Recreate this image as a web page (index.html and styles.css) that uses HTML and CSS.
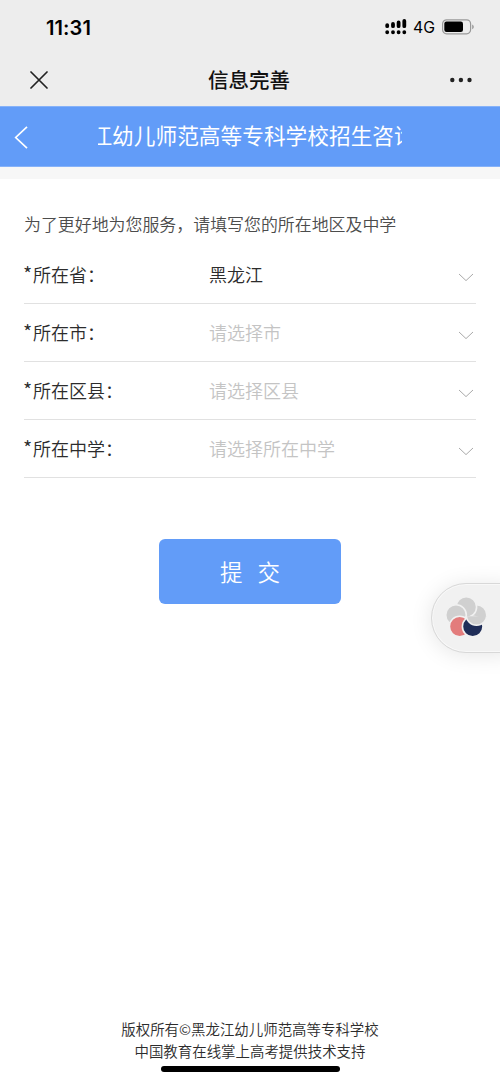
FILE: index.html
```html
<!DOCTYPE html>
<html lang="zh-CN">
<head>
<meta charset="utf-8">
<title>信息完善</title>
<link rel="stylesheet" href="styles.css">
</head>
<body>
<div class="screen">
  <header class="top">
    <div class="status">
      <span class="time">11:31</span>
      <div class="indicators">
        <svg class="signal" width="22" height="16" viewBox="0 0 22 16"><path d="M2.2 6.2V7.2M8 5V7.2M13.6 3.4V7.2M19.3 2V7.2M2.2 13.1V13.3M8 13.1V13.3M13.6 13.1V13.3M19.3 13.1V13.3" stroke="#000" stroke-width="3.8" stroke-linecap="round" fill="none"/></svg>
        <span class="network">4G</span>
        <svg class="battery" width="32" height="16" viewBox="0 0 32 16"><rect x=".6" y=".8" width="28" height="14" rx="4" fill="none" stroke="#999" stroke-width="1.2"/><rect x="2.3" y="2.5" width="18.7" height="10.4" rx="2.2"/><path d="M30.2 5.4C32.3 6.2 32.3 9.4 30.2 10.2Z" fill="#999"/></svg>
      </div>
    </div>
    <div class="nav">
      <svg width="18" height="18" viewBox="0 0 18 18"><path d="M1 1L17 17M17 1L1 17" stroke="#222" stroke-width="1.7" stroke-linecap="round"/></svg>
      <h1 class="nav-title">信息完善</h1>
      <svg width="22" height="6" viewBox="0 0 22 6" fill="#222"><circle cx="2.3" cy="3" r="2.2"/><circle cx="10.9" cy="3" r="2.2"/><circle cx="19.5" cy="3" r="2.2"/></svg>
    </div>
  </header>
  <div class="banner">
    <svg class="back" width="14" height="24" viewBox="0 0 14 24"><path d="M13 1.8L1.7 12.5L13 23.2" fill="none" stroke="#fff" stroke-width="1.7"/></svg>
    <div class="marquee"><span class="marquee-text">黑龙江幼儿师范高等专科学校招生咨询</span></div>
  </div>
  <div class="divider"></div>
  <main class="form">
    <p class="hint">为了更好地为您服务，请填写您的所在地区及中学</p>
    <div class="row"><span class="label"><span class="star">*</span>所在省<span class="colon">：</span></span><span class="value">黑龙江</span><svg class="arrow" width="16" height="9" viewBox="0 0 16 9"><path d="M1 1L8 7.6L15 1"/></svg></div>
    <div class="row"><span class="label"><span class="star">*</span>所在市<span class="colon">：</span></span><span class="value empty">请选择市</span><svg class="arrow" width="16" height="9" viewBox="0 0 16 9"><path d="M1 1L8 7.6L15 1"/></svg></div>
    <div class="row"><span class="label"><span class="star">*</span>所在区县<span class="colon">：</span></span><span class="value empty">请选择区县</span><svg class="arrow" width="16" height="9" viewBox="0 0 16 9"><path d="M1 1L8 7.6L15 1"/></svg></div>
    <div class="row"><span class="label"><span class="star">*</span>所在中学<span class="colon">：</span></span><span class="value empty">请选择所在中学</span><svg class="arrow" width="16" height="9" viewBox="0 0 16 9"><path d="M1 1L8 7.6L15 1"/></svg></div>
    <button class="submit"><span>提</span><span>交</span></button>
  </main>
  <footer class="footer">
    <div>版权所有©黑龙江幼儿师范高等专科学校</div>
    <div>中国教育在线掌上高考提供技术支持</div>
    <div class="home-bar"></div>
  </footer>
  <div class="floater">
    <svg width="44" height="44" viewBox="0 0 44 44" stroke="#f1f1f1" stroke-width="1.6">
      <clipPath id="lower"><rect x="20" y="20.3" width="24" height="20"/></clipPath>
      <circle cx="31.5" cy="19" r="10.3" fill="#d0d0d0"/>
      <circle cx="21.3" cy="11" r="10.3" fill="#d0d0d0"/>
      <circle cx="11" cy="19" r="10.3" fill="#d0d0d0"/>
      <circle cx="14.7" cy="30.5" r="10.3" fill="#e37c7c"/>
      <circle cx="27.7" cy="30.5" r="10.3" fill="#1f2d58"/>
      <circle cx="31.5" cy="19" r="10.3" fill="#d0d0d0" clip-path="url(#lower)"/>
    </svg>
  </div>
</div>
</body>
</html>
```
FILE: styles.css
```css
* { box-sizing: border-box; }
body { margin: 0; background: #fff; color: #2c2c2c; font-family: "Noto Sans CJK SC", sans-serif; }
.screen { position: relative; display: flex; flex-direction: column; height: 1082px; overflow: hidden; }
.top { height: 106px; background: #ededed; color: #000; }
.status { height: 54px; display: flex; align-items: center; justify-content: space-between; padding: 0 26px 0 46px; }
.time { font: 600 20px/24px Inter, sans-serif; padding-top: 1px; letter-spacing: .1px; }
.indicators { display: flex; align-items: center; }
.network { font: 400 15.8px/20px Inter, sans-serif; margin: 1px 7px 0 6px; }
.nav { height: 52px; display: flex; align-items: center; justify-content: space-between; padding: 0 28px 0 30px; }
.nav-title { margin: 0; padding-bottom: 2px; font-size: 20.5px; font-weight: 500; line-height: 30px; color: #111; }
.banner { height: 61px; display: flex; align-items: center; padding-left: 14px; background: #629cf8; color: #fff; border: solid #86b2f9; border-width: 1px 0; }
.marquee { width: 304px; margin-left: 70px; padding-bottom: 3px; overflow: hidden; white-space: nowrap; font-size: 21.7px; line-height: 34px; }
.marquee-text { display: inline-block; margin-left: -51px; }
.divider { height: 12px; background: #f7f7f7; }
.form { display: flex; flex-direction: column; padding: 32px 24px 0; }
.hint { margin: 0; font-size: 16.93px; line-height: 26px; color: #4c4c4c; font-weight: 350; white-space: nowrap; }
.row { height: 58px; display: flex; align-items: center; border-bottom: 1px solid #e1e1e1; font-size: 18px; line-height: 26px; font-weight: 350; }
.hint + .row { margin-top: 9px; }
.label { width: 185px; padding-bottom: 2px; }
.star { display: inline-block; width: 9px; font-size: 20px; text-indent: -1px; }
.colon { margin-left: 0; }
.value { flex: 1; padding-bottom: 2px; }
.empty { color: #c4c4c4; }
.arrow { margin: 5px 2px 0 0; fill: none; stroke: #aaa; stroke-width: 1; }
.submit { align-self: center; width: 182px; height: 65px; margin-top: 61px; border: 0; border-radius: 6px; background: #629cf8; color: #fff; display: flex; align-items: center; justify-content: center; gap: 15px; padding: 0 0 2px; font: 350 22.5px/32px "Noto Sans CJK SC", sans-serif; }
.footer { margin-top: auto; height: 64px; display: flex; flex-direction: column; align-items: center; font-size: 14.44px; line-height: 22px; font-weight: 350; }
.home-bar { width: 179px; height: 6px; border-radius: 3px; background: #000; margin-top: 4px; }
.floater { position: absolute; right: -12px; top: 583px; width: 81px; height: 70px; padding: 12px 0 0 13px; border: 1px solid #d8d8d8; border-radius: 35px 0 0 35px; background: #f1f1f1; box-shadow: 0 2px 22px rgba(0,0,0,.1), inset 0 0 0 1px #f8f8f8; }
```
